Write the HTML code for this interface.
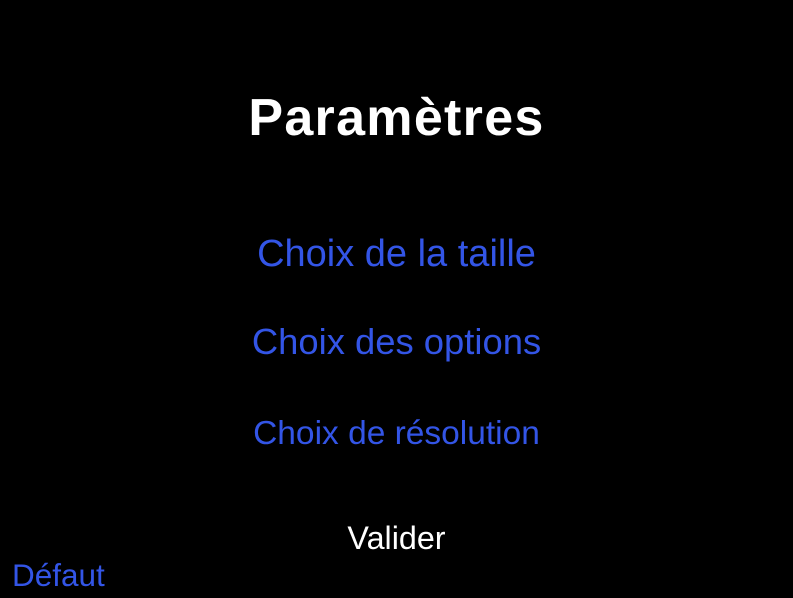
<!DOCTYPE html>
<html><head><meta charset="utf-8"><style>
html,body{margin:0;padding:0;background:#000;width:793px;height:598px;overflow:hidden}
body{position:relative;font-family:"Liberation Sans",sans-serif}
.t{position:absolute;white-space:nowrap;line-height:1}
.c{left:0;width:793px;text-align:center}
.b{color:#3355e6}
</style></head><body>
<div class="t c" style="top:92px;font-size:52px;font-weight:bold;color:#fff;letter-spacing:1.3px;">Paramètres</div>
<div class="t c b" style="top:235px;font-size:38px;left:0px">Choix de la taille</div>
<div class="t c b" style="top:324px;font-size:36.4px;">Choix des options</div>
<div class="t c b" style="top:417px;font-size:33.5px;">Choix de résolution</div>
<div class="t c" style="top:522px;font-size:32.3px;color:#fff;">Valider</div>
<div class="t b" style="left:12px;top:560px;font-size:31.5px;">Défaut</div>
</body></html>
